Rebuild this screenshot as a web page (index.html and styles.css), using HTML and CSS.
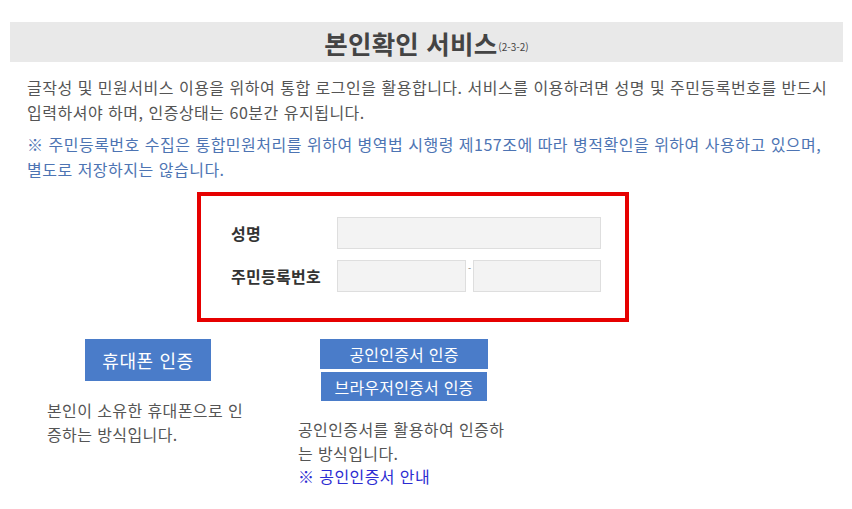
FILE: index.html
```html
<!DOCTYPE html>
<html lang="ko">
<head>
<meta charset="utf-8">
<title>본인확인 서비스</title>
<link rel="stylesheet" href="styles.css">
</head>
<body>
<div class="page">
  <h1 class="title-bar">본인확인 서비스<small class="code">(2-3-2)</small></h1>
  <div class="intro">
    <p class="desc">글작성 및 민원서비스 이용을 위하여 통합 로그인을 활용합니다. 서비스를 이용하려면 성명 및 주민등록번호를 반드시<br>입력하셔야 하며, 인증상태는 60분간 유지됩니다.</p>
    <p class="notice">※ 주민등록번호 수집은 통합민원처리를 위하여 병역법 시행령 제157조에 따라 병적확인을 위하여 사용하고 있으며,<br>별도로 저장하지는 않습니다.</p>
  </div>
  <div class="form-box">
    <div class="form-row">
      <label class="label">성명</label>
      <input class="field field-wide" type="text">
    </div>
    <div class="form-row">
      <label class="label">주민등록번호</label>
      <input class="field field-half" type="text">
      <span class="dash">-</span>
      <input class="field field-half2" type="text">
    </div>
  </div>
  <div class="methods">
    <div class="method method-phone">
      <div class="btn-group">
        <button class="btn btn-big">휴대폰 인증</button>
      </div>
      <p class="method-text">본인이 소유한 휴대폰으로 인<br>증하는 방식입니다.</p>
    </div>
    <div class="method method-cert">
      <div class="btn-group">
        <button class="btn btn-cert">공인인증서 인증</button>
        <button class="btn btn-browser">브라우저인증서 인증</button>
      </div>
      <p class="method-text">공인인증서를 활용하여 인증하<br>는 방식입니다.<br><a class="link" href="#">※ 공인인증서 안내</a></p>
    </div>
  </div>
</div>
</body>
</html>
```

FILE: styles.css
```css
* { box-sizing: border-box; }
html, body { margin: 0; padding: 0; background: #fff; }
body {
  font-family: "Noto Sans CJK KR", "Noto Sans", sans-serif;
  color: #555;
}
.page { padding-top: 22px; }
.title-bar {
  margin: 0 9px 0 10px;
  height: 40px;
  background: #e9e9e9;
  display: flex;
  justify-content: center;
  align-items: center;
  font-size: 25.5px;
  font-weight: bold;
  color: #444;
  letter-spacing: 0.2px;
}
.code {
  font-size: 10px;
  font-weight: normal;
  align-self: flex-end;
  margin-bottom: 8px;
  margin-left: 1px;
  letter-spacing: 0;
}
.intro { padding-left: 27px; margin-top: 13px; }
.desc, .notice {
  margin: 0;
  font-size: 16px;
  letter-spacing: 0.5px;
  line-height: 25px;
  white-space: nowrap;
}
.desc { color: #555; }
.notice { color: #4d74b3; margin-top: 7px; }
.form-box {
  margin: 10px 0 0 197px;
  width: 432px;
  border: 4px solid #e60000;
  padding: 21px 0 26px 30px;
}
.form-row { display: flex; align-items: center; }
.form-row + .form-row { margin-top: 11px; }
.label {
  width: 106px;
  font-size: 16px;
  letter-spacing: 0.3px;
  font-weight: bold;
  color: #333;
}
.field {
  height: 32px;
  background: #f3f3f3;
  border: 1px solid #dedede;
  margin: 0;
  padding: 0;
}
.field-wide { width: 264px; }
.field-half { width: 129px; }
.field-half2 { width: 128px; }
.dash {
  width: 7px;
  font-size: 9px;
  line-height: 1;
  color: #777;
  text-align: center;
  align-self: flex-start;
  margin-top: 4px;
}
.methods {
  display: flex;
  margin-top: 17px;
}
.method-phone { margin-left: 47px; width: 202px; }
.method-cert { margin-left: 49px; width: 212px; }
.btn-group { display: flex; flex-direction: column; align-items: center; gap: 3px; }
.btn {
  background: #4a7cc9;
  color: #fff;
  border: 0;
  font-family: inherit;
  padding: 0;
  margin: 0;
}
.btn-big { width: 126px; height: 42px; font-size: 18px; letter-spacing: 0.6px; }
.btn-cert { width: 168px; height: 30px; font-size: 16px; letter-spacing: 0.2px; }
.btn-browser { width: 166px; height: 29px; font-size: 16px; letter-spacing: 0.2px; }
.method-text {
  margin: 17px 0 0;
  font-size: 16px;
  letter-spacing: 0.4px;
  line-height: 24px;
  color: #555;
  white-space: nowrap;
}
.method-cert .method-text { line-height: 23.5px; }
.link { color: #2c2cd2; text-decoration: none; }
```
